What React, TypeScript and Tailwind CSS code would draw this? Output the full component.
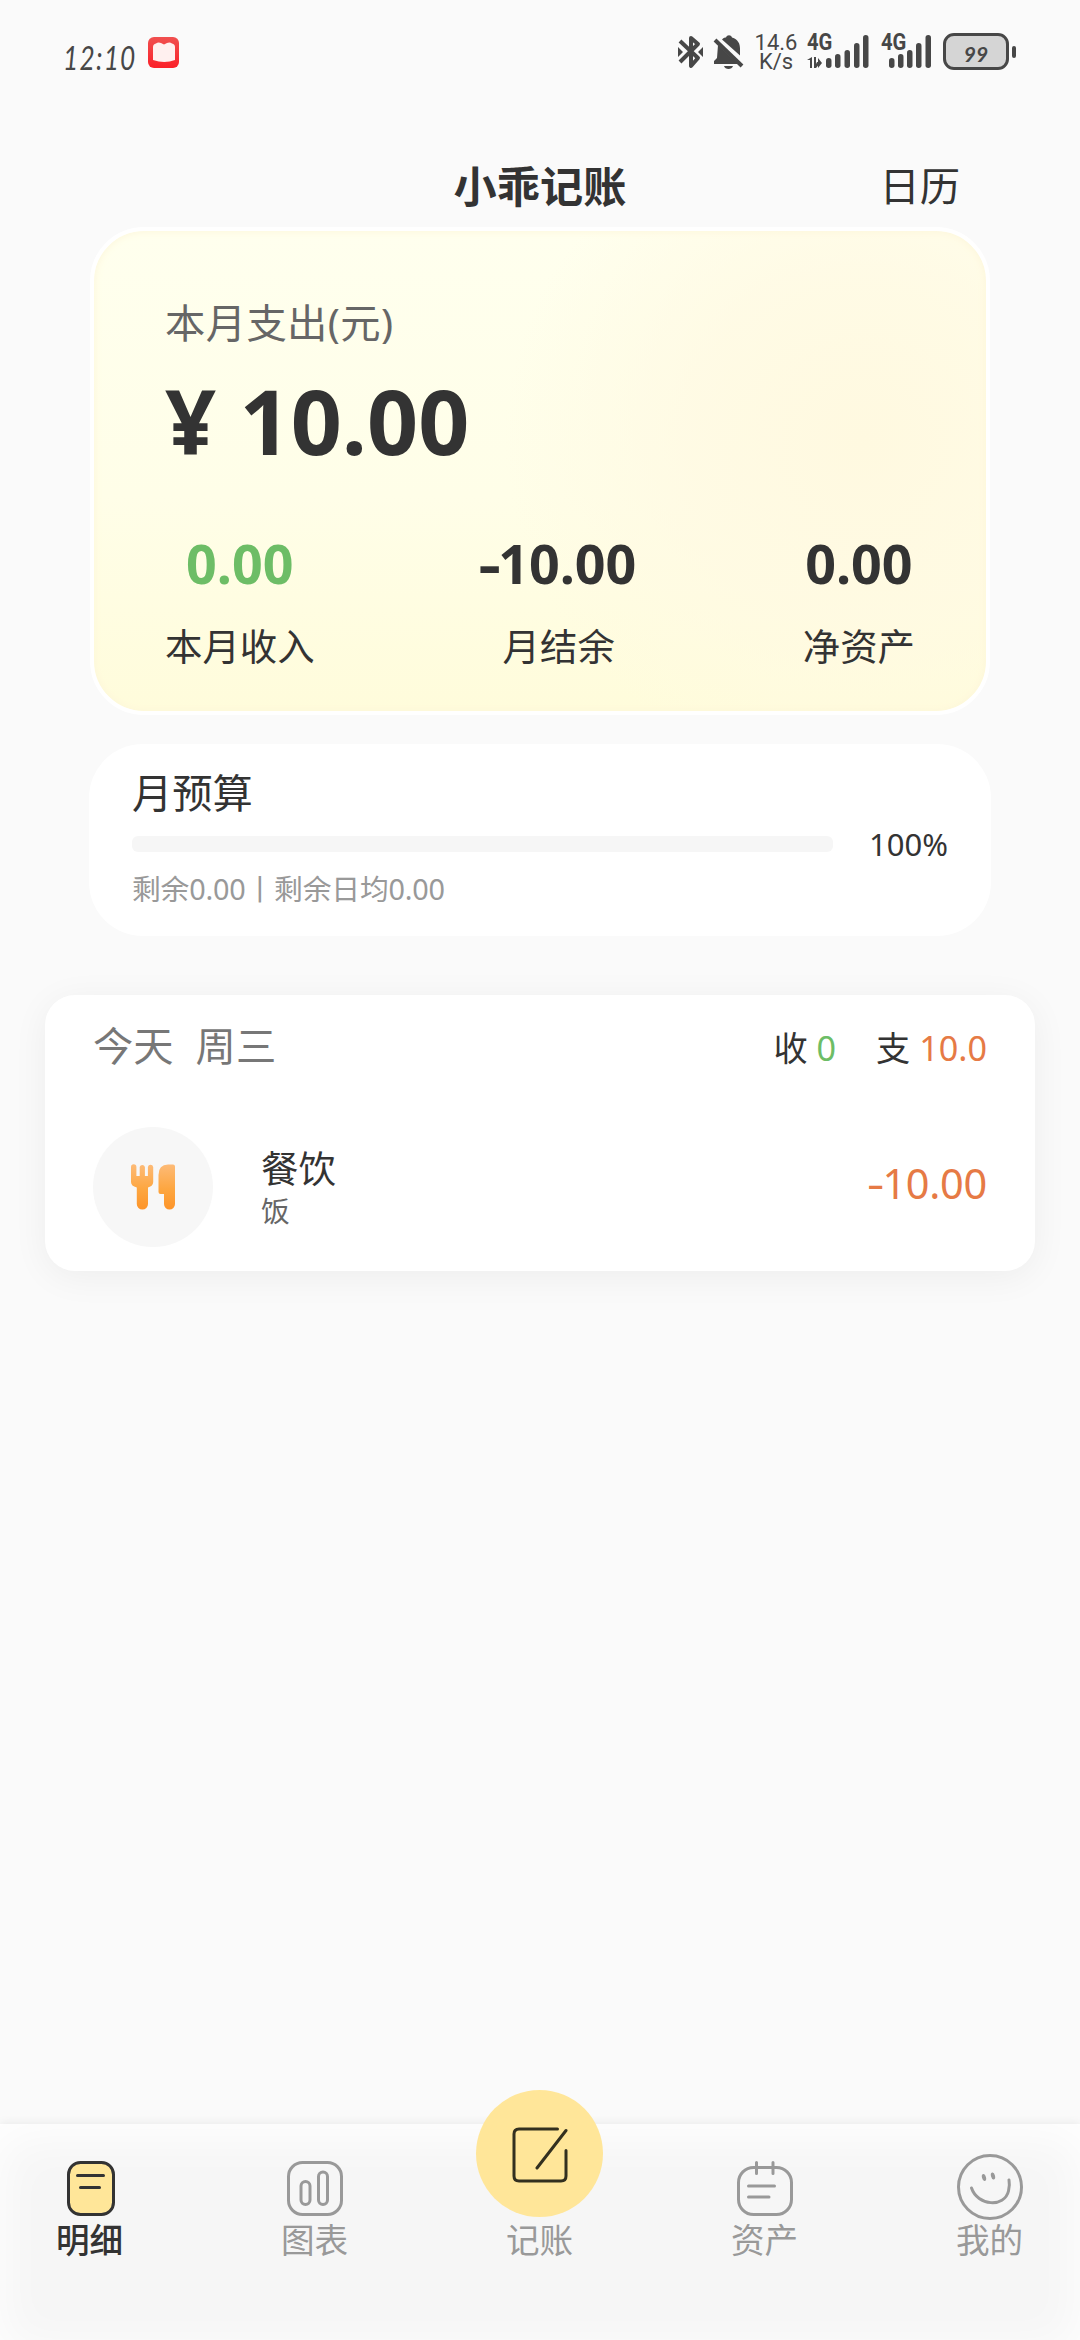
import type { ReactNode } from "react";

type Tab = { name: string; icon: ReactNode; active?: boolean };

const stats = [
  { label: "本月收入", value: "0.00", color: "text-[#6dbd66]" },
  { label: "月结余", value: "-10.00", color: "text-[#333]" },
  { label: "净资产", value: "0.00", color: "text-[#333]" },
];

// amounts use a slightly wider dash than the font's hyphen
function Amount({ value }: { value: string }) {
  if (!value.startsWith("-")) return <>{value}</>;
  return (
    <>
      <span className="inline-block scale-x-130">-</span>
      {value.slice(1)}
    </>
  );
}

function StatusBar() {
  return (
    <div className="flex h-[106px] items-start pt-[31px] pl-[63px] text-[#474747]">
      <div className="mt-[8px] h-[38px] w-[85px] origin-left scale-x-82 text-[32px] leading-[38px] tracking-[1.500px] italic font-[Lato,sans-serif]">
        12:10
      </div>
      <svg className="mt-[6px] h-8 w-8" viewBox="0 0 32 32">
        <defs>
          <linearGradient id="red" x1="0" y1="0" x2="0" y2="1">
            <stop offset="0" stopColor="#f0504f" />
            <stop offset="1" stopColor="#fb2029" />
          </linearGradient>
        </defs>
        <rect width="31" height="31" rx="6" fill="url(#red)" />
        <path d="M5 10q0-3 3-3.500 2-1.500 5-.5l3 1.500 3-1.500q3-1 5 .5 3 .5 3 3.500v13q-10.500 4-22 0z" fill="#fff0ef" />
      </svg>
      <svg className="ml-[498px] h-[40px] w-[26px]" viewBox="0 0 26 40" fill="none" stroke="currentColor" strokeWidth="4">
        <path d="M2 10l18 17-7 8V7l7 6L2 31" strokeLinejoin="round" />
        <path d="M0 16l5 5-5 5zM25 16l-5 5 5 5z" fill="currentColor" stroke="none" />
      </svg>
      <svg className="ml-[9px] h-[40px] w-[32px]" viewBox="0 0 32 40" fill="currentColor">
        <path d="M9 8.500c2-2 3-2 4-2 1-3 5-3 6 0 6 2 8 6 8 11v7zM5 14l20 19H1v-3l3-3zM11 35h9c-1 4-8 4-9 0z" />
        <path d="M2 9l27 26" stroke="currentColor" strokeWidth="4" />
      </svg>
      <div className="ml-[10px] flex w-[42px] flex-col items-center gap-[3px] pt-[4px] font-[Roboto,sans-serif] text-[22px]">
        <div className="h-[16px] leading-[16px]">14.6</div>
        <div className="h-[16px] leading-[16px]">K/s</div>
      </div>
      <div className="relative ml-[10px] h-[40px] w-[64px]">
        <span className="absolute top-[1px] left-0 origin-left scale-x-88 font-[Roboto,sans-serif] text-[23px] leading-[22px] font-bold">4G</span>
        <svg className="h-[40px] w-[64px]" viewBox="0 0 64 40" fill="currentColor">
          <path d="M0 29l5-3v11H3v-8zM7 26h2v7l1-2 4 0-5 6H7zM11 27l4 5-4 5z" />
          <rect x="19" y="27" width="5.500" height="10" rx="2.700" />
          <rect x="28" y="23" width="5.500" height="14" rx="2.700" />
          <rect x="37.500" y="19" width="5.500" height="18" rx="2.700" />
          <rect x="47" y="12" width="5.500" height="25" rx="2.700" />
          <rect x="56" y="4" width="5.500" height="33" rx="2.700" />
        </svg>
      </div>
      <div className="relative ml-[10px] h-[40px] w-[52px]">
        <span className="absolute top-[1px] left-0 origin-left scale-x-88 font-[Roboto,sans-serif] text-[23px] leading-[22px] font-bold">4G</span>
        <svg className="h-[40px] w-[52px]" viewBox="0 0 52 40" fill="currentColor">
          <rect x="8" y="27" width="5.500" height="10" rx="2.700" />
          <rect x="17" y="23" width="5.500" height="14" rx="2.700" />
          <rect x="26" y="19" width="5.500" height="18" rx="2.700" />
          <rect x="35" y="12" width="5.500" height="25" rx="2.700" />
          <rect x="44.500" y="4" width="5.500" height="33" rx="2.700" />
        </svg>
      </div>
      <div className="mt-[2px] ml-[10px] flex items-center gap-[3px]">
        <div className="flex h-[37px] w-[66px] items-center justify-center rounded-[11px] border-3 border-[#474747] bg-[#d5d5d5] pt-[5px] font-[Lato,sans-serif] text-[21px] font-bold italic">
          99
        </div>
        <div className="h-[12px] w-[4px] rounded-[2px] bg-[#474747]" />
      </div>
    </div>
  );
}

function SummaryCard() {
  return (
    <section className="mx-[90px] mt-px h-[488px] rounded-[54px] border-4 border-white bg-[radial-gradient(ellipse_360px_340px_at_770px_210px,#fff9e0_0%,#fff9e2b0_50%,#fffbe500_100%),linear-gradient(180deg,#ffffee_0%,#fffee8_55%,#fffcdb_100%)] px-[71px] pt-[69px] shadow-[inset_0_0_8px_#fcf5d8]">
      <div className="h-[48px] text-[40.300px] leading-[46px] tracking-[0.400px] text-[#666]">本月支出(元)</div>
      <div className="mt-[22px] text-[89.500px] leading-[100px] font-bold text-[#333]">¥ 10.00</div>
      <div className="mt-[63px] flex justify-between text-center">
        {stats.map((s) => (
          <div key={s.label}>
            <div className={`text-[53.800px] leading-[60px] font-bold ${s.color}`}>
              <Amount value={s.value} />
            </div>
            <div className="mt-[29px] text-[37.400px] leading-[50px] text-[#333]">{s.label}</div>
          </div>
        ))}
      </div>
    </section>
  );
}

function BudgetCard() {
  return (
    <section className="mx-[89px] mt-[29px] h-[192px] rounded-[54px] bg-white px-[43px] pt-[24px] text-[#333]">
      <div className="text-[40.300px] leading-[50px]">月预算</div>
      <div className="mt-[6px] flex h-[40px] items-center justify-between">
        <div className="h-[16px] w-[701px] rounded-[6px] bg-[#f6f6f6]" />
        <div className="text-[31px] leading-[40px]">100%</div>
      </div>
      <div className="mt-[5px] text-[28.800px] leading-[40px] tracking-[-0.200px] text-[#999]">剩余0.00丨剩余日均0.00</div>
    </section>
  );
}

function DayCard() {
  return (
    <section className="mx-[45px] mt-[59px] h-[276px] rounded-[30px] bg-white px-[48px] shadow-[0_6px_36px_rgba(0,0,0,0.055)]">
      <div className="flex h-[103px] items-center justify-between">
        <div className="flex gap-[22px] pb-[2px] text-[40.300px] leading-[48px] text-[#777]">
          <span>今天</span>
          <span>周三</span>
        </div>
        <div className="flex gap-[40px] pt-[3px] text-[34.200px] leading-[50px] text-[#333]">
          <span>
            收 <span className="text-[#6dbd66]">0</span>
          </span>
          <span>
            支 <span className="text-[#e67a45]">10.0</span>
          </span>
        </div>
      </div>
      <div className="mt-[29px] flex h-[120px]">
        <div className="flex h-[120px] w-[120px] items-center justify-center rounded-full bg-[#f7f7f7]">
          <svg className="h-[46px] w-[44px]" viewBox="0 0 44 46">
            <defs>
              <linearGradient id="food" gradientUnits="userSpaceOnUse" x1="0" y1="0" x2="0" y2="46">
                <stop offset="0" stopColor="#fdbb78" />
                <stop offset="0.550" stopColor="#fda640" />
                <stop offset="1" stopColor="#fd9429" />
              </linearGradient>
            </defs>
            <g fill="url(#food)">
              <path d="M0 3a2.700 2.700 0 0 1 5.400 0v9h3.300V3a2.700 2.700 0 0 1 5.200 0v9h3V3a2.700 2.700 0 0 1 5.300 0v15q0 4-5.200 5.500V40a5.600 5.600 0 0 1-11.200 0V23.500Q0 22 0 18z" />
              <path d="M27.500 11Q27.500.500 37 .500h5q2 0 2 2V40a5.500 5.500 0 0 1-11 0V30h-3.500q-2 0-2-2z" />
            </g>
          </svg>
        </div>
        <div className="ml-[48px] flex-1 pt-[19px]">
          <div className="text-[37.400px] leading-[46px] text-[#333]">餐饮</div>
          <div className="text-[28.800px] leading-[38px] text-[#666]">饭</div>
        </div>
        <div className="pt-[31px] text-[41.500px] leading-[50px] tracking-[-0.300px] text-[#e67a45]">
          <Amount value="-10.00" />
        </div>
      </div>
    </section>
  );
}

const tabs: Tab[] = [
  {
    name: "明细",
    active: true,
    icon: (
      <svg className="mt-[37px] ml-[2px] h-[55px] w-[48px]" viewBox="0 0 48 55" fill="none" stroke="#333" strokeWidth="3" strokeLinecap="round">
        <rect x="1.500" y="1.500" width="45" height="52" rx="12" fill="#ffe699" />
        <path d="M10.500 14.500h26M13.500 26.500h19" />
      </svg>
    ),
  },
  {
    name: "图表",
    icon: (
      <svg className="mt-[37px] ml-px h-[55px] w-[56px]" viewBox="0 0 56 55" fill="none" stroke="#999" strokeWidth="3">
        <rect x="1.500" y="1.500" width="53" height="52" rx="14" />
        <rect x="14" y="20.500" width="9" height="23" rx="4.500" />
        <rect x="31.500" y="11" width="9" height="32.500" rx="4.500" />
      </svg>
    ),
  },
  {
    name: "记账",
    icon: (
      <div className="mt-[-34px] flex h-[127px] w-[127px] items-center justify-center rounded-full bg-[#ffe699]">
        <svg className="mt-[3px] h-[56px] w-[56px]" viewBox="0 0 56 56" fill="none" stroke="#33301f" strokeWidth="3" strokeLinecap="round" strokeLinejoin="round">
          <path d="M45.500 2H7q-5 0-5 5v42q0 5 5 5h42q5 0 5-5V23.500M54 3.500L25 41" />
        </svg>
      </div>
    ),
  },
  {
    name: "资产",
    icon: (
      <svg className="mt-[37px] h-[55px] w-[56px]" viewBox="0 0 56 55" fill="none" stroke="#999" strokeWidth="3" strokeLinecap="round">
        <rect x="1.500" y="6.500" width="53" height="47" rx="15" />
        <path d="M19.500 1.500v11M36 1.500v11M11.500 25h26M11.500 36h20.500" />
      </svg>
    ),
  },
  {
    name: "我的",
    icon: (
      <svg className="mt-[30px] h-[66px] w-[66px]" viewBox="0 0 66 66" fill="none" stroke="#999" strokeWidth="3" strokeLinecap="round">
        <circle cx="33" cy="33" r="31.500" />
        <path d="M14.500 34c6 18 33 20 37 3q1.500-6 .5-11" />
        <ellipse cx="27" cy="23.500" rx="2" ry="3.500" transform="rotate(-15 27 23.500)" fill="#999" stroke="none" />
        <ellipse cx="36" cy="22" rx="2" ry="3.500" transform="rotate(-15 36 22)" fill="#999" stroke="none" />
      </svg>
    ),
  },
];

function TabBar() {
  return (
    <nav className="mt-auto flex h-[216px] justify-between bg-[#f6f6f6] pr-[57px] pl-[56px] shadow-[0_-2px_8px_rgba(0,0,0,0.060),inset_0_12px_50px_0_#fff]">
      {tabs.map((tab) => (
        <div key={tab.name} className="flex w-[67px] flex-col items-center">
          <div className="flex h-[96px] shrink-0 justify-center">{tab.icon}</div>
          <div className={`text-[33.600px] leading-[40px] whitespace-nowrap ${tab.active ? "font-medium text-[#333]" : "text-[#999]"}`}>
            {tab.name}
          </div>
        </div>
      ))}
    </nav>
  );
}

export default function App() {
  return (
    <main className="flex h-[2340px] w-[1080px] flex-col overflow-hidden bg-[#fafafa] font-['Noto_Sans','Noto_Sans_CJK_SC',sans-serif]">
      <StatusBar />
      <header className="grid h-[120px] grid-cols-3 items-center px-[120px] pt-[42px] text-[#333]">
        <h1 className="col-start-2 text-center text-[43.200px] leading-[50px] font-bold">小乖记账</h1>
        <div className="pb-[3px] text-right text-[40.300px] leading-[50px]">日历</div>
      </header>
      <SummaryCard />
      <BudgetCard />
      <DayCard />
      <TabBar />
    </main>
  );
}
